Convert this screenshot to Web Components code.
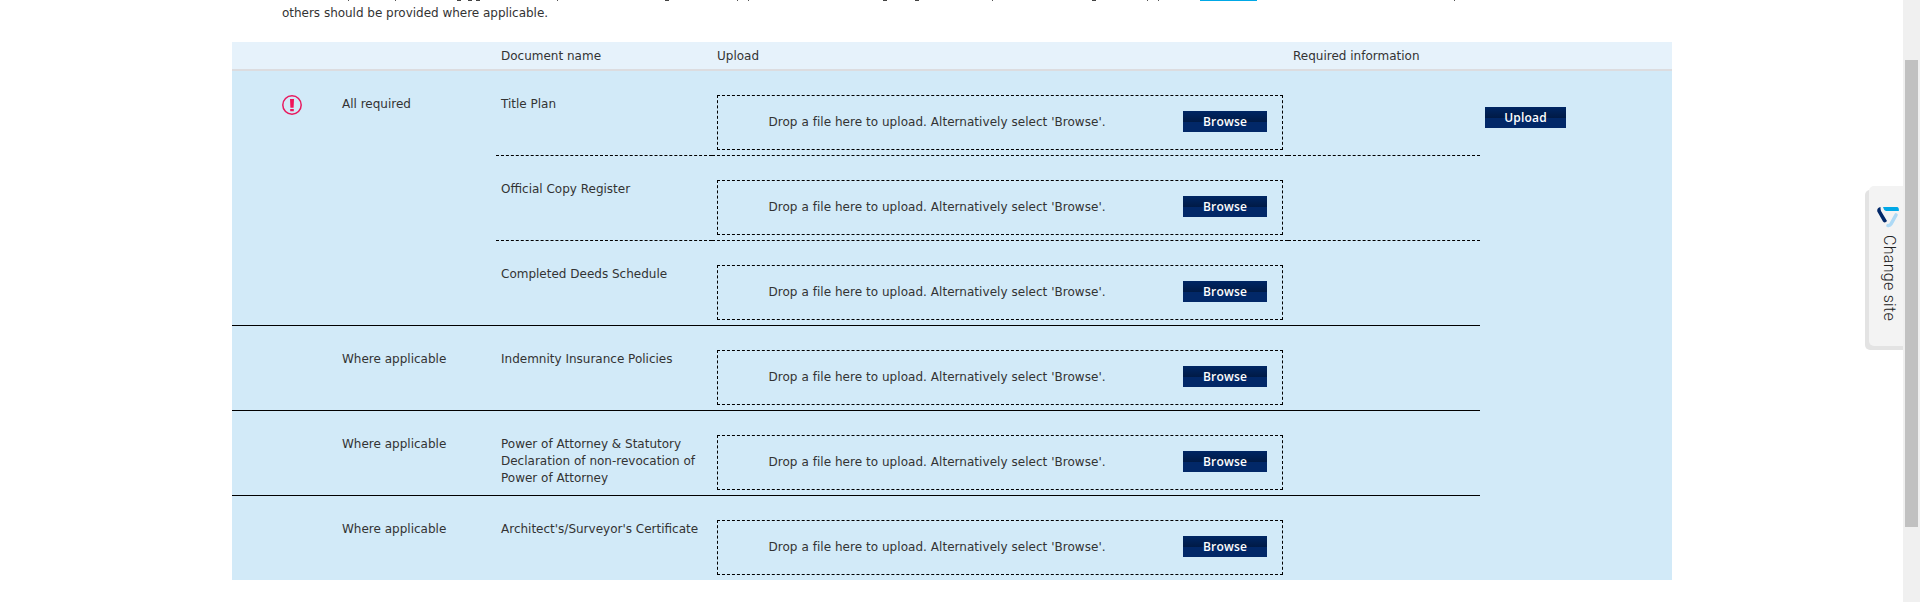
<!DOCTYPE html>
<html lang="en"><head><meta charset="utf-8"><title>Upload documents</title>
<style>
html,body{margin:0;height:602px;overflow:hidden;background:#fff}
body{font:12px/17px "DejaVu Sans",Verdana,sans-serif;color:#333}
</style></head><body>
<deeds-page></deeds-page>
<script>
const define=(name,html)=>customElements.define(name,class extends HTMLElement{
  connectedCallback(){
    if(this.shadowRoot)return;
    const t=document.createElement('template');
    t.innerHTML=typeof html==='function'?html(this):html;
    this.attachShadow({mode:'open'}).append(t.content.cloneNode(true));
  }
});
define('action-button',`<style>
:host{display:block;height:21px;box-sizing:border-box;text-align:center;color:#fff;font:600 12px/21px "Open Sans","DejaVu Sans",sans-serif;letter-spacing:.2px;
background:linear-gradient(#002664 0,#001a45 11px,#022868 11px,#022868 100%)}
</style><slot></slot>`);
define('alert-icon',`<style>:host{display:block;width:20px;height:20px}svg{display:block}</style>
<svg width="20" height="20" viewBox="0 0 20 20"><circle cx="10" cy="10" r="9.2" fill="none" stroke="#e8195e" stroke-width="1.5"/><path d="M8 4h4l-.4 8.8H8.4zM8.2 14h3.6v2.2H8.2z" fill="#f0145a"/></svg>`);
define('drop-zone',`<style>
:host{display:flex;align-items:center;box-sizing:border-box;width:566px;height:55px;border:1px dashed #000;padding:0 15px 2px 50.5px;justify-content:space-between}
action-button{width:84px}span{letter-spacing:.04px;margin-top:2px}
</style><span>Drop a file here to upload. Alternatively select 'Browse'.</span><action-button>Browse</action-button>`);
define('document-row',el=>`<style>
:host{display:grid;grid-template-columns:105px 159px 216px 576px 192px;height:85px;box-sizing:border-box}
div{box-sizing:border-box;padding:24px 5px 0}
.line{border-bottom:1px dashed #000}
:host([rule=solid]) div{border-bottom:1px solid #000}
:host([rule=none]) div{border:0}
:host([rule=none]){height:84px}
.icon{padding-left:50px}
.text{padding-top:25px}
</style>
<div class="icon">${el.hasAttribute('alert')?'<alert-icon></alert-icon>':''}</div>
<div class="text">${el.getAttribute('need')||''}</div>
<div class="text line"><slot></slot></div>
<div class="line"><drop-zone></drop-zone></div>
<div class="line"></div>`);
define('table-head',`<style>
:host{display:grid;grid-template-columns:264px 216px 576px 1fr;height:29px;box-sizing:border-box;border-bottom:2px solid #dcdcdf;background:#e6f2fb;line-height:26px;padding-top:1px}
span{padding-left:5px}
</style><span></span><span>Document name</span><span>Upload</span><span>Required information</span>`);
define('document-table',`<style>
:host{display:block;width:1440px;background:#d2eaf8}
.body{display:grid;grid-template-columns:1248px 192px}
.body>action-button{width:81px;margin:36px 0 0 5px}
</style><table-head></table-head><div class="body"><div>
<document-row alert need="All required">Title Plan</document-row>
<document-row>Official Copy Register</document-row>
<document-row rule="solid">Completed Deeds Schedule</document-row>
<document-row rule="solid" need="Where applicable">Indemnity Insurance Policies</document-row>
<document-row rule="solid" need="Where applicable">Power of Attorney &amp; Statutory Declaration of non-revocation of Power of Attorney</document-row>
<document-row rule="none" need="Where applicable">Architect's/Surveyor's Certificate</document-row>
</div><action-button>Upload</action-button></div>`);
define('site-tab',`<style>
:host{position:absolute;right:17px;top:186px;width:38px;height:164px;overflow:hidden;display:flex;justify-content:flex-end;align-items:flex-start}
.panel{display:flex;flex-direction:column;align-items:center;box-sizing:border-box;width:34px;height:160px;background:#f3f3f3;border-radius:5px 0 0 5px;box-shadow:-4px 4px 0 #e3e3e3,0 4px 0 #e3e3e3;padding:21px 0 0 4px}
span{writing-mode:vertical-rl;font:300 16px/20px Roboto,sans-serif;letter-spacing:.3px;margin:7px 0 0 2px;white-space:nowrap;color:#222}
svg{display:block}
</style><div class="panel"><svg width="22" height="21" viewBox="0 0 22 21" fill="none"><path d="M11 18.5Q13 18.8 14 17L19 8" stroke="#add9f5" stroke-width="3.6" stroke-linecap="round"/><path d="M6 0H20.5Q22.3 1 21.8 4H9Q6.5 3 6 0z" fill="#00a8e6"/><path d="M3.5 0Q-.3 1 .3 4.5L6 14.5Q8 16.5 10 14L4 4Q3.4 2 3.5 0z" fill="#022868"/></svg><span>Change site</span></div>`);
define('scroll-track',`<style>
:host{display:block;width:17px;height:602px;background:#f0f0f0;box-sizing:border-box;padding:60px 2px 0}
div{height:467px;width:13px;background:#c1c1c1}
</style><div></div>`);
/* Lowest pixel row of the paragraph line that is scrolled out above the window. */
define('scrolled-line',()=>{
  const stems=[348,395,557,737,748,992,1147,1158,1454];
  const bowls=[457,468,476,665,883,915,1092];
  const rect=(x,w,c)=>`<rect x="${x-282}" width="${w}" height="1" fill="${c}"/>`;
  return `<style>:host{display:block;height:1px}svg{display:block}</style><svg width="1200" height="1">${
    stems.map(x=>rect(x,1,'#555')).join('')+bowls.map(x=>rect(x,4,'#444')).join('')+rect(1200,57,'#00a8e6')}</svg>`;
});
define('deeds-page',`<style>
:host{display:flex;height:602px;position:relative;overflow:hidden}
main{flex:1;padding-left:232px}
.intro{padding-left:50px;height:42px}
p{margin:0;padding-top:4px;white-space:nowrap;letter-spacing:-.02px}
</style><main><div class="intro"><scrolled-line></scrolled-line><p>others should be provided where applicable.</p></div><document-table></document-table></main>
<scroll-track></scroll-track><site-tab></site-tab>`);
</script></body></html>
